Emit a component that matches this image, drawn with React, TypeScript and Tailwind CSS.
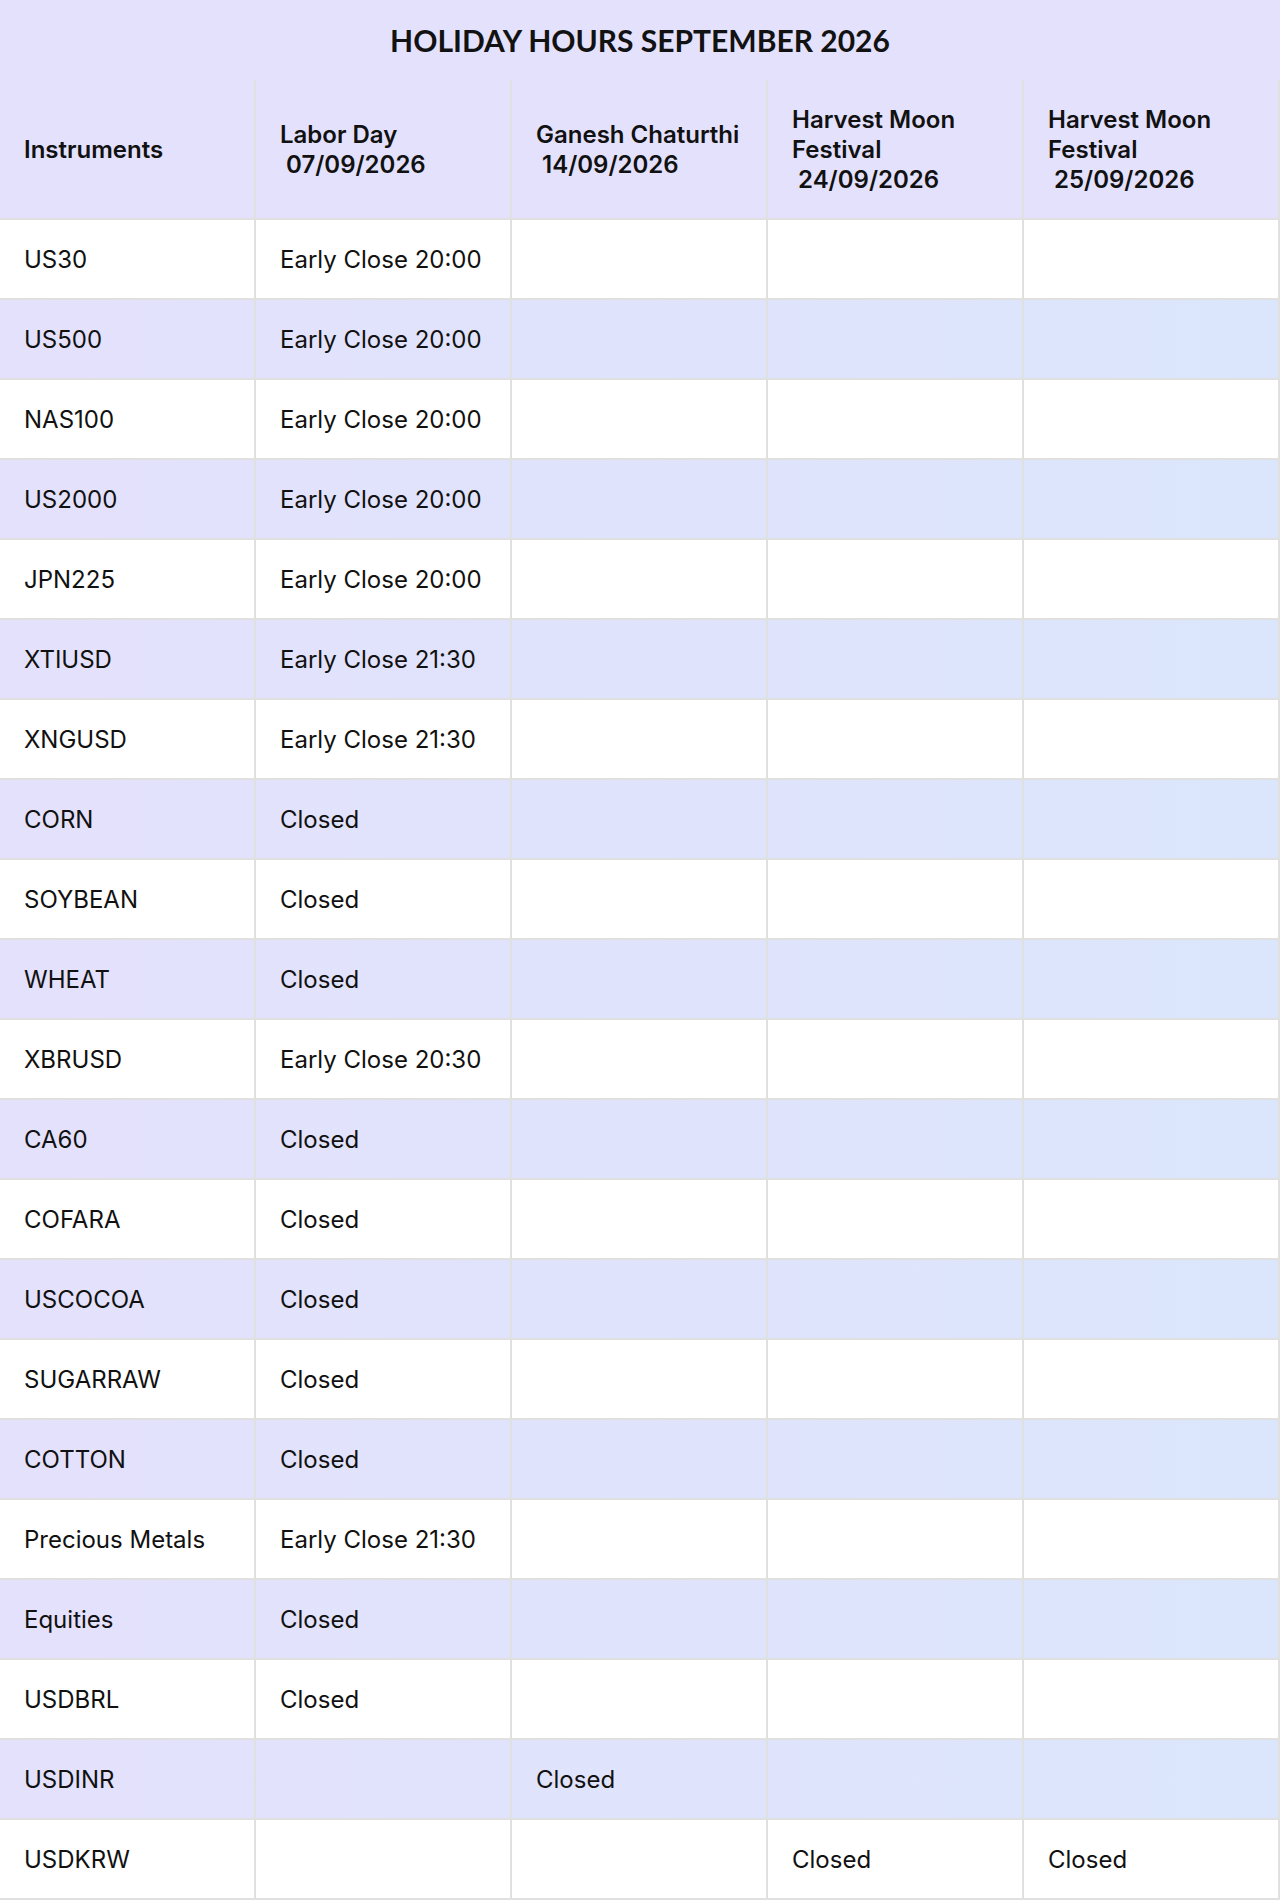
import React from "react";

const rows: [string, string, string, string, string][] = [
  ["US30", "Early Close 20:00", "", "", ""],
  ["US500", "Early Close 20:00", "", "", ""],
  ["NAS100", "Early Close 20:00", "", "", ""],
  ["US2000", "Early Close 20:00", "", "", ""],
  ["JPN225", "Early Close 20:00", "", "", ""],
  ["XTIUSD", "Early Close 21:30", "", "", ""],
  ["XNGUSD", "Early Close 21:30", "", "", ""],
  ["CORN", "Closed", "", "", ""],
  ["SOYBEAN", "Closed", "", "", ""],
  ["WHEAT", "Closed", "", "", ""],
  ["XBRUSD", "Early Close 20:30", "", "", ""],
  ["CA60", "Closed", "", "", ""],
  ["COFARA", "Closed", "", "", ""],
  ["USCOCOA", "Closed", "", "", ""],
  ["SUGARRAW", "Closed", "", "", ""],
  ["COTTON", "Closed", "", "", ""],
  ["Precious Metals", "Early Close 21:30", "", "", ""],
  ["Equities", "Closed", "", "", ""],
  ["USDBRL", "Closed", "", "", ""],
  ["USDINR", "", "Closed", "", ""],
  ["USDKRW", "", "", "Closed", "Closed"],
];

const headers: string[][] = [
  ["Instruments"],
  ["Labor Day", "\u00a007/09/2026"],
  ["Ganesh Chaturthi", "\u00a014/09/2026"],
  ["Harvest Moon Festival", "\u00a024/09/2026"],
  ["Harvest Moon Festival", "\u00a025/09/2026"],
];

export default function App() {
  return (
    <div className="w-[1280px] bg-white text-[#111111]" style={{ fontFamily: "Inter, 'Noto Sans', sans-serif" }}>
      <div className="h-[80px] bg-[#e4e1fd] flex items-center justify-center">
        <h1 className="text-[30px] font-bold text-[#121212]" style={{ fontFamily: "Lato, 'Liberation Sans', sans-serif" }}>
          HOLIDAY HOURS SEPTEMBER 2026
        </h1>
      </div>
      <div className="grid grid-cols-5 h-[140px] bg-[#e4e1fd] border-b-2 border-[#e0e0e0]">
        {headers.map((h, i) => (
          <div key={i} className="flex items-center pl-6 pr-4 pt-[2px] border-r-2 border-[#e0e0e0]">
            <div className="text-[24px] leading-[30px] font-semibold">
              {h.map((line, j) => (
                <div key={j}>{line}</div>
              ))}
            </div>
          </div>
        ))}
      </div>
      {rows.map((r, i) => (
        <div
          key={i}
          className={
            "grid grid-cols-5 h-[80px] border-b-2 border-[#e0e0e0] " +
            (i % 2 === 1 ? "bg-gradient-to-r from-[#e4e1fc] to-[#dbe6fc]" : "bg-white")
          }
        >
          {r.map((c, j) => (
            <div key={j} className="flex items-center pl-6 pt-[2px] border-r-2 border-[#e0e0e0] text-[24px]">
              {c}
            </div>
          ))}
        </div>
      ))}
    </div>
  );
}
